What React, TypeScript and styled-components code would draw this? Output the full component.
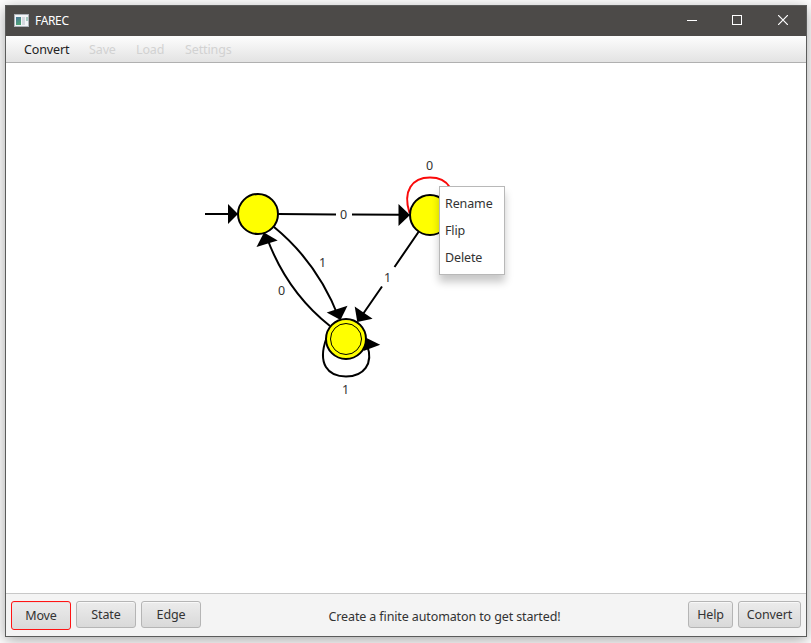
import React from "react";
import styled, { createGlobalStyle } from "styled-components";

const Global = createGlobalStyle`
  * { box-sizing: border-box; }
  html, body { margin: 0; height: 100%; overflow: hidden; }
  body { background: #fff; font-family: "Noto Sans", "Open Sans", sans-serif; font-size: 12.5px; letter-spacing: -0.12px; color: #333; }
`;

const Desktop = styled.div`
  width: 811px;
  height: 643px;
  padding: 5px 4px 6px 5px;
  overflow: hidden;
`;

const Frame = styled.div`
  display: flex;
  flex-direction: column;
  width: 802px;
  height: 632px;
  border: 1px solid #5b5c5b;
  background: #fff;
  box-shadow: 0 3px 14px rgba(0, 0, 0, 0.36);
`;

const TitleBar = styled.header`
  display: flex;
  align-items: center;
  height: 30px;
  flex: none;
  padding-left: 8px;
  background: #4c4a48;
  color: #fff;
`;

const Title = styled.span`
  flex: 1;
  margin-left: 6px;
  font-size: 12px;
  line-height: 18px;
  letter-spacing: -0.35px;
`;

const WindowButton = styled.button`
  width: 46px;
  height: 30px;
  padding: 0 0 2px;
  border: 0;
  background: transparent;
  display: grid;
  place-items: center;
`;

const MenuBar = styled.nav`
  display: flex;
  flex: none;
  height: 27px;
  padding-left: 18px;
  border-bottom: 1px solid #b0b0b0;
  background: linear-gradient(#fdfdfd, #e3e3e3);
`;

const MenuEntry = styled.span<{ $w: number; $disabled?: boolean }>`
  width: ${(p) => p.$w}px;
  line-height: 27px;
  white-space: nowrap;
  color: ${(p) => (p.$disabled ? "#d2d2d2" : "#222")};
`;

const Canvas = styled.main`
  flex: 1;
  min-height: 0;
  position: relative;
  background: #fff;
`;

const Diagram = styled.svg`
  display: block;
  font-size: 12.5px;
`;

const ContextMenu = styled.div`
  position: absolute;
  left: 433px;
  top: 123px;
  width: 66px;
  height: 89px;
  padding: 3px 0;
  border: 1px solid #b8b8b8;
  background: #fff;
  box-shadow: 0 7px 8px rgba(0, 0, 0, 0.22);
`;

const ContextItem = styled.div`
  height: 27px;
  padding-left: 5px;
  line-height: 27px;
`;

const ToolBar = styled.footer`
  display: flex;
  flex: none;
  height: 43px;
  padding: 7px 5px 0;
  gap: 5px;
  border-top: 1px solid #c8c8c8;
  background: #f4f4f4;
`;

const ToolButton = styled.button<{ $w: number; $active?: boolean }>`
  width: ${(p) => p.$w}px;
  height: ${(p) => (p.$active ? 29 : 27)}px;
  padding: 0;
  border: 1px solid ${(p) => (p.$active ? "#ff1414" : "#b5b5b5")};
  border-radius: 3px;
  background: linear-gradient(#ececec, #d9d9d9);
  box-shadow: inset 0 1px 0 ${(p) => (p.$active ? "#e8dede" : "#f8f8f8")};
  color: #333;
  font: inherit;
  line-height: 25px;
  letter-spacing: inherit;
`;

const Status = styled.div`
  flex: 1;
  padding-top: 4px;
  text-align: center;
  line-height: 24px;
  white-space: nowrap;
`;

const AppIcon = () => (
  <svg width="15" height="15" viewBox="0 0 15 15">
    <defs>
      <linearGradient id="pane" x1="0" y1="0" x2="0.4" y2="1">
        <stop offset="0" stopColor="#48749a" />
        <stop offset="1" stopColor="#4fa276" />
      </linearGradient>
    </defs>
    <rect width="15" height="13" fill="#aeb3b9" />
    <rect x="1" y="1" width="13" height="11" fill="#f3f5f7" />
    <rect x="2" y="3" width="5" height="8" fill="url(#pane)" />
    <rect x="8" y="3" width="3" height="8" fill="#d6d9df" />
    <rect x="12" y="3" width="2" height="4" fill="#a5cabf" />
  </svg>
);

const Arrow = ({ points }: { points: string }) => <polygon points={points} fill="#000" />;

const Label = ({ x, y, children }: { x: number; y: number; children: string }) => (
  <text x={x} y={y} textAnchor="middle" fill="#333">{children}</text>
);

const Automaton = () => (
  <Diagram width="800" height="530" viewBox="6 63 800 530">
    <g fill="none" stroke="#000" strokeWidth="2">
      <path d="M205 214H230" />
      <path d="M278 214L336 214.4M352 214.5L400 214.8" />
      <path d="M418.500 232L394.500 267M382 286.500L363 314" />
      <path d="M274 227Q317.500 262.500 339 318" />
      <path d="M330 326Q287 292 267 238" />
      <path d="M326.500 338C317 364 328 376.500 346 376.500C363.500 376.500 374 364 367 345" />
      <path d="M409.500 213C402.500 191 412 177.500 430 177.500C448 177.500 457.500 191 450.500 213" stroke="#fa0a0a" />
    </g>
    <g stroke="#000" strokeWidth="2" fill="#ff0">
      <circle cx="258" cy="214" r="20" />
      <circle cx="430" cy="215" r="20" />
      <circle cx="346" cy="339" r="20" />
      <circle cx="346" cy="339" r="15.500" strokeWidth="1" />
    </g>
    <Arrow points="228,204 228,224 238,214" />
    <Arrow points="398.500,204 398.500,226 410,215" />
    <Arrow points="264,232.500 256.500,247 277.700,240.500" />
    <Arrow points="326.700,312.500 347.500,305.800 340.500,320" />
    <Arrow points="354.700,306.500 372.600,318.800 357.300,322" />
    <Arrow points="366.500,338 380.200,344.700 363.500,351" />
    <Label x={343.5} y={219}>0</Label>
    <Label x={429.5} y={170}>0</Label>
    <Label x={322.5} y={267}>1</Label>
    <Label x={281.5} y={295}>0</Label>
    <Label x={387.5} y={282}>1</Label>
    <Label x={345.5} y={394}>1</Label>
  </Diagram>
);

export default function App() {
  return (
    <Desktop>
      <Global />
      <Frame>
        <TitleBar>
          <AppIcon />
          <Title>FAREC</Title>
          <WindowButton aria-label="Minimize">
            <svg width="12" height="10"><path d="M2 5.500H12" stroke="#fff" /></svg>
          </WindowButton>
          <WindowButton aria-label="Maximize">
            <svg width="10" height="10"><rect x=".5" y=".5" width="9" height="9" fill="none" stroke="#fff" /></svg>
          </WindowButton>
          <WindowButton aria-label="Close">
            <svg width="10" height="10"><path d="M0 0L10 10M10 0L0 10" stroke="#fff" strokeWidth="1.200" /></svg>
          </WindowButton>
        </TitleBar>
        <MenuBar>
          <MenuEntry $w={65}>Convert</MenuEntry>
          <MenuEntry $w={47} $disabled>Save</MenuEntry>
          <MenuEntry $w={49} $disabled>Load</MenuEntry>
          <MenuEntry $w={50} $disabled>Settings</MenuEntry>
        </MenuBar>
        <Canvas>
          <Automaton />
          <ContextMenu>
            <ContextItem>Rename</ContextItem>
            <ContextItem>Flip</ContextItem>
            <ContextItem>Delete</ContextItem>
          </ContextMenu>
        </Canvas>
        <ToolBar>
          <ToolButton $w={60} $active>Move</ToolButton>
          <ToolButton $w={60}>State</ToolButton>
          <ToolButton $w={60}>Edge</ToolButton>
          <Status>Create a finite automaton to get started!</Status>
          <ToolButton $w={45}>Help</ToolButton>
          <ToolButton $w={63}>Convert</ToolButton>
        </ToolBar>
      </Frame>
    </Desktop>
  );
}
